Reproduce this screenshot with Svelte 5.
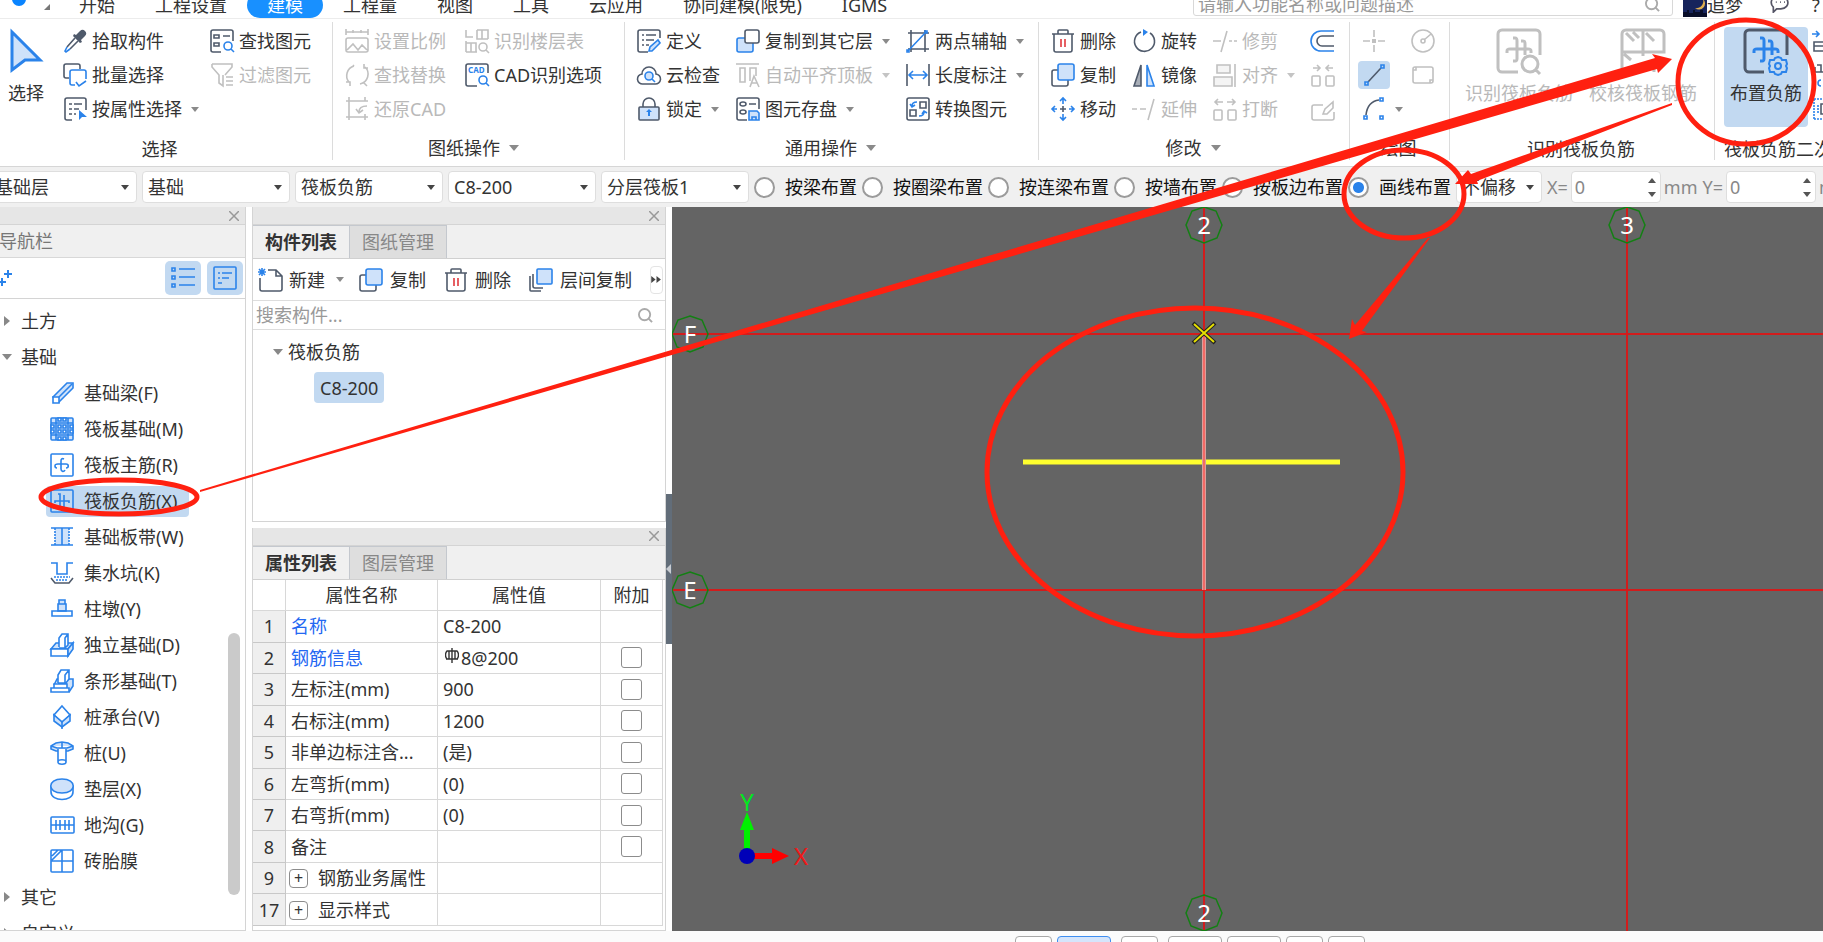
<script>
  // every icon is a list of [class, path] pairs on a 24x24 grid (44x44 for the big ones)
  const icons = {
    pick: [['solid', 'M13 6l4-4a3 3 0 0 1 5 5l-4 4 1 2-2 1-7-7 1-2z'], ['ink', 'M12 9l-8 9M15 12l-8 8'], ['blue', 'M4 18l-2 4 1 1 4-3']],
    batch: [['ink', 'M17 6V3a2 2 0 0 0-2-2H3a2 2 0 0 0-2 2v10a2 2 0 0 0 2 2h3'], ['blue', 'M12 22H9a2 2 0 0 1-2-2V9a2 2 0 0 1 2-2h12a2 2 0 0 1 2 2v7M13 19l3 4 7-5']],
    byProp: [['ink', 'M9 23H4a2 2 0 0 1-2-2V3a2 2 0 0 1 2-2h17a2 2 0 0 1 2 2v10M6 7h3M11 7h8M6 12h3M11 12h5M6 17h3M11 17h2'], ['fill', 'M16 13v10l3-3h5z']],
    find: [['ink', 'M11 23H3a2 2 0 0 1-2-2V3a2 2 0 0 1 2-2h18a2 2 0 0 1 2 2v9M4 6h5v3H4zM13 7h7M4 14h5v3H4z'], ['blue', 'M18 13a4 4 0 1 0 0 8a4 4 0 1 0 0-8M21 20l3 3']],
    filter: [['ink', 'M2 1h20v3l-7 8M2 1v3l7 8v8l4 3V12M16 14h7M16 18h7M16 22h7']],
    scale: [['ink', 'M1 0v6M23 0v6M1 3h22M8 1v3M16 1v3M3 9h18a2 2 0 0 1 2 2v10a2 2 0 0 1-2 2H3a2 2 0 0 1-2-2V11a2 2 0 0 1 2-2M2 21l6-6 5 6 4-5 5 5']],
    replace: [['ink', 'M9 3a10 10 0 0 0-5 16M1 19h4v4M15 21a10 10 0 0 0 5-17M23 5h-4V1M9 3l-1-1M18 19l4 4']],
    restore: [['ink', 'M1 4h22M4 0v23M1 20h22M20 0v4M20 17v6M22 9c-6 0-8 2-8 6M11 12l3 4 4-3']],
    floorTable: [['ink', 'M1 1v7h7M12 1h11v9M12 1v9h11M17 1v9M1 14h10v9M1 23h11M6 14v9M1 12v11'], ['ink', 'M18 14a4 4 0 1 0 0 8a4 4 0 1 0 0-8M21 21l3 3']],
    cad: [['ink', 'M12 23H3a2 2 0 0 1-2-2V3a2 2 0 0 1 2-2h18a2 2 0 0 1 2 2v7'], ['blue', 'M18 13a4 4 0 1 0 0 8a4 4 0 1 0 0-8M21 20l3 3']],
    define: [['ink', 'M11 23H3a2 2 0 0 1-2-2V3a2 2 0 0 1 2-2h18a2 2 0 0 1 2 2v6M5 6h2M9 6h10M5 11h2M9 11h8M5 16h2M9 16h3'], ['tint', 'M12 22l1-4 8-7 2 3-8 8z']],
    cloud: [['ink', 'M6 21a5 5 0 0 1-1-10a7 7 0 0 1 14 0a5 5 0 0 1-1 10z'], ['tint', 'M12 9a4 4 0 1 0 0 8a4 4 0 1 0 0-8M15 16l3 3']],
    lock: [['ink', 'M6 10V7a6 6 0 0 1 12 0v3'], ['inktint', 'M3 10h18a1 1 0 0 1 1 1v11a1 1 0 0 1-1 1H3a1 1 0 0 1-1-1V11a1 1 0 0 1 1-1z'], ['fill', 'M12 12l3 3h-2v4h-2v-4H9z']],
    copyLayer: [['tint', 'M3 9h12a2 2 0 0 1 2 2v10a2 2 0 0 1-2 2H3a2 2 0 0 1-2-2V11a2 2 0 0 1 2-2z'], ['paper', 'M11 1h10a2 2 0 0 1 2 2v9a2 2 0 0 1-2 2H11a2 2 0 0 1-2-2V3a2 2 0 0 1 2-2z']],
    alignTop: [['ink', 'M0 1h23M4 5h5v14H4zM14 18V5h6v8M14 24l4-11 5 11M16 20h5']],
    save: [['ink', 'M11 23H3a2 2 0 0 1-2-2V3a2 2 0 0 1 2-2h18a2 2 0 0 1 2 2v9M4 7a3 2 0 1 0 6 0a3 2 0 1 0-6 0M13 7h7M4 15a3 2 0 1 0 6 0a3 2 0 1 0-6 0'], ['tint', 'M13 14h8l2 2v7H13zM16 23v-3h4v3']],
    twoPoint: [['ink', 'M5 1v22M19 1v22M2 4h21M2 20h21'], ['blue', 'M2 22L20 3M1 21h2v2H1zM19 2h2v2h-2z']],
    length: [['ink', 'M1 1v22M23 1v22'], ['blue', 'M3 12h18M7 8l-4 4 4 4M17 8l4 4-4 4']],
    convert: [['ink', 'M3 1h18a2 2 0 0 1 2 2v18a2 2 0 0 1-2 2H3a2 2 0 0 1-2-2V3a2 2 0 0 1 2-2zM14 5h6v6h-6zM4 13h6v6H4z'], ['blue', 'M11 5c-3 0-5 1-5 4M4 7l2 3 3-2M13 19c3 0 5-1 5-4M16 17l2-3 3 2']],
    trash: [['ink', 'M1 5h22M7 5V2a1 1 0 0 1 1-1h8a1 1 0 0 1 1 1v3M3 5v16a2 2 0 0 0 2 2h14a2 2 0 0 0 2-2V5'], ['red', 'M10 10v8M14 10v8']],
    copy: [['ink', 'M7 7H3a2 2 0 0 0-2 2v12a2 2 0 0 0 2 2h12a2 2 0 0 0 2-2v-4'], ['tint', 'M9 1h12a2 2 0 0 1 2 2v12a2 2 0 0 1-2 2H9a2 2 0 0 1-2-2V3a2 2 0 0 1 2-2z']],
    move: [['blue', 'M12 1v6M9 4l3-3 3 3M12 23v-6M9 20l3 3 3-3M1 12h5M4 9l-3 3 3 3M23 12h-5M20 9l3 3-3 3'], ['ink', 'M12 9v6M9 12h6']],
    rotate: [['ink', 'M9 3a10 10 0 1 0 9 1'], ['fill', 'M11 0l5 3-5 4z']],
    mirror: [['solidgray', 'M9 2v21H2z'], ['tint', 'M15 2v21h7z']],
    extend: [['ink', 'M0 12h5M8 12h6M22 2l-6 21']],
    trim: [['ink', 'M0 12h8M14 2L8 23M16 12h3M21 12h3']],
    align: [['inktint', 'M4 2h13v8H4zM1 14h18v9H1z'], ['ink', 'M22 1v23']],
    breakIcon: [['ink', 'M2 13h6a1 1 0 0 1 1 1v8a1 1 0 0 1-1 1H2a1 1 0 0 1-1-1v-8a1 1 0 0 1 1-1zM16 13h6a1 1 0 0 1 1 1v8a1 1 0 0 1-1 1h-6a1 1 0 0 1-1-1v-8a1 1 0 0 1 1-1zM10 5H2M5 2L2 5l3 3M14 5h8M19 2l3 3-3 3']],
    offset: [['blue', 'M23 2H10a10 10 0 0 0 0 20h13'], ['ink', 'M23 7H11a5 5 0 0 0 0 10h12']],
    merge: [['ink', 'M2 13h6a1 1 0 0 1 1 1v8a1 1 0 0 1-1 1H2a1 1 0 0 1-1-1v-8a1 1 0 0 1 1-1zM16 13h6a1 1 0 0 1 1 1v8a1 1 0 0 1-1 1h-6a1 1 0 0 1-1-1v-8a1 1 0 0 1 1-1zM2 5h6M6 2l3 3-3 3M22 5h-6M18 2l-3 3 3 3']],
    edit: [['ink', 'M12 8H3a2 2 0 0 0-2 2v11a2 2 0 0 0 2 2h18a2 2 0 0 0 2-2v-6M12 17l2-5 8-7v6l-6 6z']],
    point: [['ink', 'M12 1v7M12 16v7M1 12h7M16 12h7'], ['solid', 'M10 10h4v4h-4z']],
    circle: [['ink', 'M12 1a11 11 0 1 0 0 22a11 11 0 1 0 0-22M13 11l7-6M12 10a2 2 0 1 0 0 4a2 2 0 1 0 0-4']],
    line: [['ink', 'M6 19L19 5'], ['blue', 'M3 19h3v3H3zM19 2h3v3h-3z']],
    rect: [['ink', 'M4 4h16a2 2 0 0 1 2 2v12a2 2 0 0 1-2 2H4a2 2 0 0 1-2-2V6a2 2 0 0 1 2-2zM2 7h3V4M19 20v-3h3']],
    arc: [['ink', 'M4 18C5 9 9 4 17 3'], ['blue', 'M2 19h3v3H2zM18 1h3v3h-3zM18 19h3v3h-3z']],
    newFile: [['ink', 'M2 10v11a2 2 0 0 0 2 2h18a2 2 0 0 0 2-2V8l-6-6h-8M18 2v6h6'], ['blue', 'M1 1l6 6M7 1L1 7M4 0v8M0 4h8']],
    layerCopy: [['ink', 'M1 8v14a1 1 0 0 0 1 1h10M4 6v12a2 2 0 0 0 2 2h8'], ['tint', 'M9 1h13a1 1 0 0 1 1 1v13a1 1 0 0 1-1 1H9a1 1 0 0 1-1-1V2a1 1 0 0 1 1-1z']],
    side1: [['blue', 'M0 5h7M4 2l3 3-3 3'], ['ink', 'M2 13h10v9H2zM2 17h10']],
    side2: [['ink', 'M2 22V12H0M3 4v5h6V2H5M3 9h8'], ['blue', 'M9 17a3 3 0 1 0 0 6']],
    side3: [['dots', 'M2 2v20M2 2h12M2 22h12M6 8v8'], ['ink', 'M12 7H9v10h3']],
    list: [['blue', 'M1 2h3v3H1zM1 10h3v3H1zM1 18h3v3H1zM8 3h16M8 11h16M8 19h16']],
    card: [['blue', 'M2 1h20a1 1 0 0 1 1 1v20a1 1 0 0 1-1 1H2a1 1 0 0 1-1-1V2a1 1 0 0 1 1-1zM5 7h2M9 7h10M5 12h2M9 12h7M5 17h4']],
    beam: [['tint', 'M3 16L17 2h6v5L9 21z'], ['white', 'M3 16h6v6H3z'], ['blue', 'M9 16L22 3']],
    raft: [['tint', 'M2 1h20a1 1 0 0 1 1 1v20a1 1 0 0 1-1 1H2a1 1 0 0 1-1-1V2a1 1 0 0 1 1-1z'], ['blue', 'M1 6h22M1 18h22M6 1v22M18 1v22'], ['white', 'M8 8h3v3H8zM13 8h3v3h-3zM8 13h3v3H8zM13 13h3v3h-3zM1 8h3v3H1zM1 13h3v3H1zM20 8h3v3h-3zM20 13h3v3h-3zM8 1h3v3H8zM13 1h3v3h-3zM8 20h3v3H8zM13 20h3v3h-3z']],
    rebarMain: [['blue', 'M2 1h20a1 1 0 0 1 1 1v20a1 1 0 0 1-1 1H2a1 1 0 0 1-1-1V2a1 1 0 0 1 1-1zM5 13c0-2 1-2 3-2h8c3 0 3 4 0 4M14 6c-2-1-3 0-3 2v8c0 3 3 3 4 1M7 15c-2 0-2-1-2-2']],
    rebarNeg: [['blue', 'M2 1h20a1 1 0 0 1 1 1v20a1 1 0 0 1-1 1H2a1 1 0 0 1-1-1V2a1 1 0 0 1 1-1zM5 14v-2h14v2M8 5h2v13H8M14 6v12h-2']],
    strip: [['tintonly', 'M5 4h14v16H5z'], ['blue', 'M1 3h22M1 20h22M12 3v17'], ['dots', 'M5 3v17M19 3v17']],
    pit: [['blue', 'M1 2h6v11h10V2h6'], ['dots', 'M4 16h16M6 19h12'], ['ink', 'M1 17l4 5h14l4-5']],
    pier: [['tint', 'M9 3h6v4H9zM8 7h8v7H8z'], ['blue', 'M2 14h20v5H2z']],
    isolated: [['tint', 'M1 16l5-6h17l-5 6z'], ['white', 'M1 16h17v7H1zM9 14V5l3-4h6v11l-3 3H9M15 15V5l3-4'], ['tint', 'M18 16l5-6v6l-5 7z']],
    stripFound: [['tint', 'M4 16l3-6h16v7l-4 6'], ['white', 'M1 19h18v4H1zM4 15h13v4H4zM8 14V6l3-5h8v9l-3 4H8M15 14V6l4-5']],
    cap: [['white', 'M12 1l8 9-8 7-8-7z'], ['tint', 'M4 10v6l8 6 8-6v-6l-8 7z'], ['blue', 'M12 17v7']],
    pile: [['tint', 'M1 5l5-3 6-1 6 1 5 3v3l-5 2H6L1 8zM1 5l6 2h10l6-2M12 1v6'], ['white', 'M8 8v13c0 3 8 3 8 0V8M8 21c0-3 8-3 8 0']],
    cushion: [['white', 'M1 9v6c0 10 22 10 22 0V9'], ['tint', 'M12 2C-3 2-3 16 12 16S27 2 12 2z']],
    trench: [['blue', 'M2 4h21a1 1 0 0 1 1 1v14a1 1 0 0 1-1 1H2a1 1 0 0 1-1-1V5a1 1 0 0 1 1-1zM1 12h23M6 7v10M10 7v10M15 7v10M19 7v10']],
    brick: [['blue', 'M2 1h20a1 1 0 0 1 1 1v20a1 1 0 0 1-1 1H2a1 1 0 0 1-1-1V2a1 1 0 0 1 1-1zM12 1v22M1 12h22M2 7l6-6M2 11L12 1']],
    cursor: [['tint', 'M3 3l28 28H16L3 41z']],
    recog: [['ink', 'M21 43H5a4 4 0 0 1-4-4V5a4 4 0 0 1 4-4h34a4 4 0 0 1 4 4v21M10 24v-2c0-2 1-2 3-2h18c2 0 3 0 3 2v2M16 9h2c2 0 2 1 2 3v18c0 2-1 2-4 2M24 12h2c2 0 2 1 2 3v11M33 27a8 8 0 1 0 0 16a8 8 0 1 0 0-16M38 40l5 5']],
    check: [['ink', 'M14 43H5a4 4 0 0 1-4-4V5a4 4 0 0 1 4-4h34a4 4 0 0 1 4 4v18H1M22 1v26M5 4l8 8M12 3l6 6M25 4l8 8M3 25l7 6M26 34h14M33 30v13']],
    place: [['ink', 'M20 43H5a4 4 0 0 1-4-4V5a4 4 0 0 1 4-4h34a4 4 0 0 1 4 4v21'], ['blue', 'M10 24v-2c0-2 1-2 3-2h18c2 0 3 0 3 2v2M16 9h2c2 0 2 1 2 3v18c0 2-1 2-4 2M24 12h2c2 0 2 1 2 3v11'], ['gear', 'M34 28l3 1 1 2 4 0 1 4-1 2 1 2-1 4-4 0-1 2-3 1-3-1-1-2-4 0-1-4 1-2-1-2 1-4 4 0 1-2zM34 34a3 3 0 1 0 0 6a3 3 0 1 0 0-6']],
  };

  const tabs = ['开始', '工程设置', '建模', '工程量', '视图', '工具', '云应用', '协同建模(限免)', 'IGMS'];

  const groups = [
    {
      label: '选择',
      big: [{ icon: 'cursor', text: '选择' }],
      cols: [
        [{ icon: 'pick', text: '拾取构件' }, { icon: 'batch', text: '批量选择' }, { icon: 'byProp', text: '按属性选择', more: true }],
        [{ icon: 'find', text: '查找图元' }, { icon: 'filter', text: '过滤图元', off: true }],
      ],
    },
    {
      label: '图纸操作',
      more: true,
      cols: [
        [{ icon: 'scale', text: '设置比例', off: true }, { icon: 'replace', text: '查找替换', off: true }, { icon: 'restore', text: '还原CAD', off: true }],
        [{ icon: 'floorTable', text: '识别楼层表', off: true }, { icon: 'cad', text: 'CAD识别选项' }],
      ],
    },
    {
      label: '通用操作',
      more: true,
      cols: [
        [{ icon: 'define', text: '定义' }, { icon: 'cloud', text: '云检查' }, { icon: 'lock', text: '锁定', more: true }],
        [{ icon: 'copyLayer', text: '复制到其它层', more: true }, { icon: 'alignTop', text: '自动平齐顶板', more: true, off: true }, { icon: 'save', text: '图元存盘', more: true }],
        [{ icon: 'twoPoint', text: '两点辅轴', more: true }, { icon: 'length', text: '长度标注', more: true }, { icon: 'convert', text: '转换图元' }],
      ],
    },
    {
      label: '修改',
      more: true,
      cols: [
        [{ icon: 'trash', text: '删除' }, { icon: 'copy', text: '复制' }, { icon: 'move', text: '移动' }],
        [{ icon: 'rotate', text: '旋转' }, { icon: 'mirror', text: '镜像' }, { icon: 'extend', text: '延伸', off: true }],
        [{ icon: 'trim', text: '修剪', off: true }, { icon: 'align', text: '对齐', more: true, off: true }, { icon: 'breakIcon', text: '打断', off: true }],
        [{ icon: 'offset', title: '偏移' }, { icon: 'merge', title: '合并', off: true }, { icon: 'edit', title: '编辑', off: true }],
      ],
    },
    {
      label: '绘图',
      cols: [
        [{ icon: 'point', title: '点', off: true }, { icon: 'line', title: '直线', active: true }, { icon: 'arc', title: '弧线', more: true }],
        [{ icon: 'circle', title: '圆', off: true }, { icon: 'rect', title: '矩形', off: true }],
      ],
    },
    {
      label: '识别筏板负筋',
      big: [{ icon: 'recog', text: '识别筏板负筋', off: true }, { icon: 'check', text: '校核筏板钢筋', off: true }],
      cols: [],
    },
    {
      label: '筏板负筋二次编辑',
      big: [{ icon: 'place', text: '布置负筋', active: true }],
      cols: [[{ icon: 'side1', title: '查看布筋' }, { icon: 'side2', title: '查改标注' }, { icon: 'side3', title: '布筋范围' }]],
    },
  ];

  const pickers = [
    { label: '楼层', value: '基础层' },
    { label: '类别', value: '基础' },
    { label: '构件类型', value: '筏板负筋' },
    { label: '构件', value: 'C8-200' },
    { label: '分层', value: '分层筏板1' },
  ];

  const modes = ['按梁布置', '按圈梁布置', '按连梁布置', '按墙布置', '按板边布置', '画线布置'];
  let mode = $state('画线布置');

  const navItems = [
    { icon: 'beam', text: '基础梁(F)' },
    { icon: 'raft', text: '筏板基础(M)' },
    { icon: 'rebarMain', text: '筏板主筋(R)' },
    { icon: 'rebarNeg', text: '筏板负筋(X)' },
    { icon: 'strip', text: '基础板带(W)' },
    { icon: 'pit', text: '集水坑(K)' },
    { icon: 'pier', text: '柱墩(Y)' },
    { icon: 'isolated', text: '独立基础(D)' },
    { icon: 'stripFound', text: '条形基础(T)' },
    { icon: 'cap', text: '桩承台(V)' },
    { icon: 'pile', text: '桩(U)' },
    { icon: 'cushion', text: '垫层(X)' },
    { icon: 'trench', text: '地沟(G)' },
    { icon: 'brick', text: '砖胎膜' },
  ];
  let current = $state('筏板负筋(X)');

  const rows = [
    { no: 1, name: '名称', value: 'C8-200', key: true, noBox: true },
    { no: 2, name: '钢筋信息', value: '8@200', key: true, rebar: true },
    { no: 3, name: '左标注(mm)', value: '900' },
    { no: 4, name: '右标注(mm)', value: '1200' },
    { no: 5, name: '非单边标注含...', value: '(是)' },
    { no: 6, name: '左弯折(mm)', value: '(0)' },
    { no: 7, name: '右弯折(mm)', value: '(0)' },
    { no: 8, name: '备注', value: '' },
    { no: 9, name: '钢筋业务属性', value: '', fold: true, noBox: true },
    { no: 17, name: '显示样式', value: '', fold: true, noBox: true },
  ];

  // axis bubbles
  const bubbles = [
    { x: 532, y: 18, text: '2' },
    { x: 955, y: 18, text: '3' },
    { x: 18, y: 127, text: 'F' },
    { x: 18, y: 383, text: 'E' },
    { x: 532, y: 706, text: '2' },
  ];
  const ring = '0,-18 12,-14 18,0 13,13 0,18 -13,13 -18,0 -12,-14';

  const statusSizes = ['s', 'm on', 's', 'm', 'm', 's', 's'];
</script>

{#snippet icon(name, big = false)}
  <svg class="icon" class:big viewBox={big ? (name === 'cursor' ? '0 0 34 44' : '0 0 44 44') : '0 0 24 24'} aria-hidden="true">
    {#each icons[name] as [kind, d]}
      <path class={kind} {d} />
    {/each}
    {#if name === 'cad'}
      <text x="3" y="10" class="mini">CAD</text>
    {/if}
  </svg>
{/snippet}

{#snippet closeStrip()}
  <div class="strip">
    <button type="button" aria-label="关闭">
      <svg viewBox="0 0 10 10"><path d="M0 0l10 10M10 0L0 10" /></svg>
    </button>
  </div>
{/snippet}

<div class="app">
  <header class="menu">
    <span class="logo"></span>
    <span class="corner"></span>
    <nav>
      {#each tabs as tab}
        <button type="button" class="tab" class:active={tab === '建模'}>{tab}</button>
      {/each}
    </nav>
    <div class="search">
      <input type="text" placeholder="请输入功能名称或问题描述" aria-label="搜索功能" />
      <svg viewBox="0 0 16 16"><circle cx="7" cy="7" r="6" /><path d="M11 11l4 4" /></svg>
    </div>
    <button type="button" class="user">
      <svg viewBox="0 0 24 24" aria-hidden="true">
        <path fill="#16245c" d="M0 0h24v24H0z" />
        <path fill="#e0b050" d="M20 6a6 6 0 0 1-8 9a7 7 0 0 0 8-9" />
        <path fill="#080d28" d="M0 19h4v-2h2v3h4v-3h2v2h5v-2h3v3h4v4H0z" />
      </svg>
      追梦
    </button>
    <button type="button" class="tool" aria-label="消息">
      <svg viewBox="0 0 24 24"><path d="M11 3c12 0 15 15 2 16H8l-4 4v-6C-1 12 2 3 11 3z" /><path d="M7 11h1M12 11h1M17 11h1" /></svg>
    </button>
    <button type="button" class="tool help">?</button>
  </header>

  <section class="ribbon">
    {#each groups as group}
      <div class="group">
        <div class="tools">
          {#each group.big ?? [] as item}
            <button type="button" class="bigbtn" class:off={item.off} class:active={item.active}>
              {@render icon(item.icon, true)}
              <span>{item.text}</span>
            </button>
          {/each}
          {#each group.cols as col}
            <div class="col">
              {#each col as item}
                <button type="button" class="cmd" class:off={item.off} class:active={item.active} aria-label={item.title}>
                  {@render icon(item.icon)}
                  {#if item.text}<span>{item.text}</span>{/if}
                  {#if item.more}<i class="caret"></i>{/if}
                </button>
              {/each}
            </div>
          {/each}
        </div>
        <div class="label">
          {group.label}
          {#if group.more}<i class="caret wide"></i>{/if}
        </div>
      </div>
    {/each}
  </section>

  <section class="options">
    {#each pickers as picker}
      <label class="picker">
        <select aria-label={picker.label}><option>{picker.value}</option></select>
      </label>
    {/each}
    {#each modes as item}
      <label class="mode">
        <input type="radio" name="mode" value={item} bind:group={mode} />
        {item}
      </label>
    {/each}
    <label class="picker short">
      <select aria-label="偏移方式"><option>不偏移</option></select>
    </label>
    {#each ['X', 'Y'] as axis}
      <label class="offset">
        {axis}=
        <span class="spin">
          <input type="text" value="0" />
          <i class="up"></i>
          <i class="down"></i>
        </span>
        mm
      </label>
    {/each}
  </section>

  <main>
    <aside class="nav">
      {@render closeStrip()}
      <h2>导航栏</h2>
      <div class="navbar">
        <svg class="plus" viewBox="0 0 14 16"><path d="M8 0v8M4 4h8M2 8v8M0 12h6" /></svg>
        <button type="button" class="view" aria-label="列表">{@render icon('list')}</button>
        <button type="button" class="view" aria-label="详情">{@render icon('card')}</button>
      </div>
      <div class="treebox">
        <ul class="tree">
          <li class="root"><i class="fold"></i>土方</li>
          <li class="root"><i class="fold open"></i>基础</li>
          {#each navItems as item}
            <li>
              <button type="button" class:active={current === item.text} onclick={() => (current = item.text)}>
                {@render icon(item.icon)}
                {item.text}
              </button>
            </li>
          {/each}
          <li class="root"><i class="fold"></i>其它</li>
          <li class="root"><i class="fold"></i>自定义</li>
        </ul>
        <span class="thumb"></span>
      </div>
    </aside>

    <div class="panels">
      <section class="panel upper">
        {@render closeStrip()}
        <div class="ptabs">
          <button type="button" class="active">构件列表</button>
          <button type="button">图纸管理</button>
        </div>
        <div class="bar">
          <button type="button">{@render icon('newFile')}新建<i class="caret"></i></button>
          <button type="button">{@render icon('copy')}复制</button>
          <button type="button">{@render icon('trash')}删除</button>
          <button type="button">{@render icon('layerCopy')}层间复制</button>
          <button type="button" class="next" aria-label="更多">
            <svg viewBox="0 0 12 8"><path d="M0 0l5 4-5 4zM6 0l5 4-5 4z" /></svg>
          </button>
        </div>
        <div class="find">
          <input type="text" placeholder="搜索构件..." aria-label="搜索构件" />
          <svg viewBox="0 0 16 16"><circle cx="7" cy="7" r="6" /><path d="M11 11l4 4" /></svg>
        </div>
        <div class="parts">
          <div class="part"><i class="fold open"></i>筏板负筋</div>
          <button type="button">C8-200</button>
        </div>
      </section>

      <section class="panel lower">
        {@render closeStrip()}
        <div class="ptabs">
          <button type="button" class="active">属性列表</button>
          <button type="button">图层管理</button>
        </div>
        <div class="tablebox">
          <table>
            <thead>
              <tr><th class="no"></th><th class="name">属性名称</th><th>属性值</th><th class="extra">附加</th></tr>
            </thead>
            <tbody>
              {#each rows as row}
                <tr>
                  <td class="no">{row.no}</td>
                  <td class:key={row.key}>
                    {#if row.fold}<button type="button" class="expand" aria-label="展开">+</button>{/if}{row.name}
                  </td>
                  <td>
                    {#if row.rebar}
                      <svg class="rebar" viewBox="0 0 14 16"><path d="M7 0v15M4 3v8M10 3v8M1 11h12M4 3H2C0 5 0 9 2 11M10 3h2c2 2 2 6 0 8M4 3h6" /></svg>
                    {/if}{row.value}
                  </td>
                  <td class="extra">
                    {#if !row.noBox}<input type="checkbox" aria-label={row.name} />{/if}
                  </td>
                </tr>
              {/each}
            </tbody>
          </table>
        </div>
      </section>
    </div>

    <div class="splitter"><span></span></div>

    <div class="canvas">
      <svg aria-label="绘图区">
        <g class="grid">
          <path d="M532 0V724M955 0V724" />
          <path d="M0 127H2000M0 383H2000" />
        </g>
        {#each bubbles as b}
          <g transform="translate({b.x} {b.y})">
            <polygon class="ring" points={ring} />
            <text y="9">{b.text}</text>
          </g>
        {/each}
        <path class="bar-line" d="M351 255H668" />
        <path class="pick-line" d="M532 127V383" />
        <path class="pick-core" d="M532 127V383" />
        <path class="mark-edge" d="M521 116l22 20M543 116l-22 20" />
        <path class="mark" d="M522 117l20 18M542 117l-20 18" />
        <g class="axes">
          <path class="yarrow" d="M72 645v-22h-4l7-18 7 18h-4v22z" />
          <path class="xarrow" d="M82 646h18v-5l17 8-17 8v-5H82z" />
          <circle cx="75" cy="649" r="8" fill="#0000b8" />
          <text x="75" y="604" class="y">Y</text>
          <text x="129" y="658" class="x">X</text>
        </g>
      </svg>
    </div>
  </main>

  <footer>
    {#each statusSizes as size}
      <button type="button" class={size} aria-label="状态"></button>
    {/each}
  </footer>

  <!-- red guide marks over the whole window -->
  <svg class="notes" aria-hidden="true">
    <ellipse cx="119" cy="497" rx="78" ry="17" />
    <ellipse cx="1404" cy="194" rx="60" ry="44" />
    <ellipse cx="1746" cy="82" rx="68" ry="62" />
    <ellipse cx="1195" cy="472" rx="208" ry="164" />
    <polygon points="200,490 1655,58 1652,54 1672,59 1658,73 1657,69 200,492" />
    <polygon points="1672,103 1471,174 1468,170 1455,184 1478,184 1477,181 1672,105" />
    <polygon points="1428,238 1355,325 1352,319 1349,339 1367,332 1362,331 1430,238" />
  </svg>
</div>

<style>
  :global(body) {
    margin: 0;
  }

  .app {
    --ink: #4f5a6b;
    --blue: #2b83ea;
    --tint: #cfe2fa;
    --pick: #c2d9f1;
    position: relative;
    display: flex;
    flex-direction: column;
    height: 100vh;
    overflow: hidden;
    background: #fbfbfb;
    color: #333;
    font: 18px/24px 'Noto Sans', 'Noto Sans CJK SC', sans-serif;
  }

  button,
  input,
  select {
    font: inherit;
    color: inherit;
    margin: 0;
    padding: 0;
    border: 0;
    background: none;
    box-sizing: border-box;
  }

  button {
    white-space: nowrap;
  }

  /* Icons */
  .icon {
    width: 24px;
    height: 24px;
    flex: none;
    overflow: visible;
    fill: none;
    stroke-width: 1.6;
  }

  .icon.big {
    width: auto;
    height: 44px;
    stroke-width: 3;
  }

  .ink,
  .inktint,
  .paper {
    stroke: var(--ink);
  }

  .paper,
  .white {
    fill: #fff;
  }

  .inktint,
  .tint,
  .tintonly {
    fill: var(--tint);
  }

  .blue,
  .tint,
  .white,
  .gear {
    stroke: var(--blue);
  }

  .gear {
    stroke-width: 2;
  }

  .fill {
    fill: var(--blue);
  }

  .solid {
    fill: var(--ink);
  }

  .solidgray {
    fill: #a9afb8;
    stroke: var(--ink);
  }

  .red {
    stroke: #e0393e;
  }

  .dots {
    stroke: var(--blue);
    stroke-dasharray: 2 1;
  }

  .mini {
    fill: var(--blue);
    font-size: 8px;
    font-weight: 700;
  }

  .off {
    --ink: #c0c0c0;
    --blue: #c0c0c0;
    --tint: #f4f4f4;
    color: #b9b9b9;
  }

  .caret {
    width: 0;
    height: 0;
    flex: none;
    border: 4px solid transparent;
    border-top: 5px solid #8a8a8a;
    border-bottom: 0;
    margin-left: 4px;
  }

  .off .caret {
    border-top-color: #c4c4c4;
  }

  .caret.wide {
    border-width: 6px 5px 0;
    margin-left: 9px;
  }

  /* Menu */
  .menu {
    display: flex;
    align-items: flex-end;
    height: 18px;
    flex: none;
    overflow: hidden;
    background: #fff;
    border-bottom: 1px solid #ececec;
  }

  .logo {
    width: 14px;
    height: 14px;
    margin: 0 18px 12px 12px;
    border-radius: 50%;
    background: #0a84ff;
  }

  .corner {
    border: 3px solid #777;
    border-top-color: transparent;
    border-left-color: transparent;
    margin-bottom: 8px;
  }

  .menu nav {
    display: flex;
    padding-left: 9px;
  }

  .tab {
    height: 26px;
    padding: 0 20px;
  }

  .tab.active {
    color: #fff;
    background: #1890ff;
    border-radius: 13px;
  }

  .search {
    display: flex;
    align-items: center;
    flex: 0 1 480px;
    box-sizing: border-box;
    height: 24px;
    margin: 0 10px 2px auto;
    padding: 0 12px 0 4px;
    border: 1px solid #d8d8d8;
    border-radius: 3px;
  }

  .search input,
  .find input {
    flex: 1;
    min-width: 0;
  }

  input::placeholder {
    color: #999;
    opacity: 1;
  }

  .search svg,
  .find svg {
    width: 15px;
    height: 15px;
    fill: none;
    stroke: #aaa;
    stroke-width: 2;
  }

  .user {
    display: flex;
    align-items: center;
    height: 27px;
  }

  .user svg {
    width: 24px;
    height: 24px;
  }

  .tool {
    margin-left: 25px;
    height: 26px;
  }

  .tool.help {
    width: 14px;
    margin-left: 17px;
  }

  .tool svg {
    width: 24px;
    height: 20px;
    fill: none;
    stroke: #556;
    stroke-width: 2;
  }

  /* Ribbon */
  .ribbon {
    display: flex;
    flex: none;
    height: 147px;
    overflow: hidden;
    background: #fff;
    border-bottom: 1px solid #d6d6d6;
  }

  .group {
    display: flex;
    flex-direction: column;
    flex: none;
    margin: 3px 0 6px;
    padding: 0 14px 0 12px;
    border-right: 1px solid #dcdcdc;
  }

  .tools {
    display: flex;
    gap: 16px;
    padding-top: 2px;
  }

  .group:nth-child(1) {
    padding: 0 21px 0 8px;
  }

  .group:nth-child(1) .tools {
    gap: 11px;
  }

  .group:nth-child(1) .bigbtn {
    margin-right: 8px;
  }

  .group:nth-child(2) {
    padding-right: 22px;
  }

  .group:nth-child(2) .tools {
    gap: 19px;
  }

  .group:nth-child(5) .tools {
    gap: 8px;
  }

  .group:nth-child(6) {
    padding: 0 17px 0 15px;
  }

  .group:nth-child(7) {
    padding: 0 0 0 9px;
  }

  .group:nth-child(7) .tools {
    gap: 4px;
  }

  .col {
    display: flex;
    flex-direction: column;
    align-items: flex-start;
  }

  .cmd {
    display: flex;
    align-items: center;
    gap: 5px;
    height: 34px;
  }

  .cmd.active {
    height: 28px;
    margin: 3px 0 3px -4px;
    padding: 0 4px;
    border-radius: 4px;
    background: var(--pick);
  }

  .bigbtn {
    display: flex;
    flex-direction: column;
    align-items: center;
    gap: 8px;
    height: 100px;
    margin-top: 3px;
    padding-top: 2px;
  }

  .bigbtn.active {
    padding: 2px 6px 0;
    border-radius: 4px;
    background: var(--pick);
  }

  .label {
    display: flex;
    flex: 1;
    align-items: center;
    justify-content: center;
    padding-top: 10px;
    white-space: nowrap;
  }

  /* Options bar */
  .options {
    display: flex;
    align-items: center;
    gap: 5px;
    flex: none;
    height: 40px;
    margin-left: -11px;
    background: #f0f0f0;
    overflow: hidden;
    white-space: nowrap;
  }

  .picker {
    position: relative;
    flex: none;
    width: 148px;
  }

  .picker.short {
    width: 86px;
  }

  .picker select {
    width: 100%;
    height: 32px;
    padding-left: 5px;
    appearance: none;
    background: #fff;
    border: 1px solid #dedede;
    border-radius: 4px;
  }

  .picker::after {
    content: '';
    position: absolute;
    right: 8px;
    top: 14px;
    border: 4px solid transparent;
    border-top: 5px solid #444;
    border-bottom: 0;
  }

  .mode {
    display: flex;
    align-items: center;
    gap: 10px;
    color: #111;
  }

  .mode input {
    width: 21px;
    height: 21px;
    appearance: none;
    border: 2px solid #9b9b9b;
    border-radius: 50%;
    background: #fff;
  }

  .mode input:checked {
    background: radial-gradient(circle, #2b83ea 5px, #fff 6px);
  }

  .offset {
    display: flex;
    align-items: center;
    gap: 3px;
    color: #888;
  }

  .spin {
    position: relative;
  }

  .spin input {
    width: 90px;
    height: 32px;
    padding-left: 3px;
    background: #fff;
    border: 1px solid #dedede;
    border-radius: 4px;
  }

  .spin i {
    position: absolute;
    right: 5px;
    border: 4px solid transparent;
  }

  .spin .up {
    top: 7px;
    border-top: 0;
    border-bottom: 5px solid #555;
  }

  .spin .down {
    bottom: 6px;
    border-bottom: 0;
    border-top: 5px solid #555;
  }

  /* Body */
  main {
    display: flex;
    flex: 1;
    min-height: 0;
    background: #fff;
  }

  .strip {
    display: flex;
    align-items: center;
    justify-content: flex-end;
    flex: none;
    height: 17px;
    padding-right: 6px;
    background: #e6e6e6;
    border-bottom: 1px solid #d4d4d4;
  }

  .strip button {
    display: flex;
  }

  .strip svg {
    width: 10px;
    height: 10px;
    stroke: #999;
    stroke-width: 1.5;
  }

  .nav {
    display: flex;
    flex-direction: column;
    flex: none;
    width: 245px;
    margin-right: 6px;
    border-right: 1px solid #d4d4d4;
    border-bottom: 1px solid #d4d4d4;
  }

  .nav h2 {
    margin: 0;
    font-size: 18px;
    font-weight: 400;
    line-height: 32px;
    text-indent: -1px;
    color: #777;
    background: #f0f0f0;
    border-bottom: 1px solid #d8d8d8;
  }

  .navbar {
    display: flex;
    align-items: center;
    gap: 6px;
    height: 40px;
    padding-right: 2px;
    border-bottom: 1px solid #d4d4d4;
  }

  .plus {
    width: 14px;
    height: 16px;
    margin-right: auto;
    stroke: var(--blue);
    stroke-width: 2;
  }

  .view {
    display: flex;
    align-items: center;
    justify-content: center;
    width: 36px;
    height: 34px;
    border-radius: 5px;
    background: var(--pick);
  }

  .treebox {
    position: relative;
    flex: 1;
    min-height: 0;
    overflow: hidden;
  }

  .tree {
    list-style: none;
    margin: 0;
    padding: 4px 0 0;
  }

  .tree li {
    display: flex;
    align-items: center;
    height: 36px;
    padding-left: 46px;
  }

  .tree li.root {
    padding-left: 2px;
  }

  .tree button {
    display: flex;
    align-items: center;
    gap: 10px;
    height: 31px;
    padding: 0 12px 0 4px;
    border-radius: 4px;
  }

  .tree button.active {
    background: var(--pick);
  }

  .fold {
    width: 0;
    flex: none;
    border: 5px solid transparent;
    border-left: 6px solid #888;
    border-right: 0;
    margin: 0 11px 0 2px;
  }

  .fold.open {
    border: 5px solid transparent;
    border-top: 6px solid #888;
    border-bottom: 0;
    margin: 0 9px 0 0;
  }

  .thumb {
    position: absolute;
    right: 5px;
    top: 53%;
    width: 12px;
    height: 262px;
    border-radius: 6px;
    background: #cacaca;
  }

  .panels {
    display: flex;
    flex-direction: column;
    gap: 6px;
    flex: none;
    width: 414px;
  }

  .panel {
    display: flex;
    flex-direction: column;
    box-sizing: border-box;
    min-height: 0;
    border: 1px solid #d4d4d4;
    border-top: 0;
  }

  .upper {
    flex: 315;
  }

  .lower {
    flex: 404;
  }

  .ptabs {
    display: flex;
    flex: none;
    height: 33px;
    background: #f0f0f0;
    border-bottom: 1px solid #d0d0d0;
  }

  .ptabs button {
    padding: 0 12px;
    color: #888;
    background: #dedede;
    border: 1px solid #c4c8ce;
    border-width: 1px 1px 0 0;
  }

  .ptabs .active {
    color: #333;
    font-weight: 700;
    background: #f0f0f0;
  }

  .bar {
    display: flex;
    align-items: center;
    flex: none;
    gap: 18px;
    height: 41px;
    padding: 0 2px 0 5px;
    border-bottom: 1px solid #ddd;
  }

  .bar button {
    display: flex;
    align-items: center;
    gap: 7px;
  }

  .bar .caret {
    margin: 0 -3px 0 4px;
  }

  .bar .next {
    justify-content: center;
    width: 15px;
    height: 28px;
    margin-left: auto;
    border: 1px solid #e4e4e4;
    border-radius: 4px;
  }

  .next svg {
    width: 11px;
    height: 7px;
    flex: none;
    fill: #444;
  }

  .find {
    display: flex;
    align-items: center;
    flex: none;
    height: 28px;
    padding: 0 12px 0 3px;
    border-bottom: 1px solid #ddd;
  }

  .parts {
    padding: 4px 20px;
  }

  .part {
    display: flex;
    align-items: center;
    height: 36px;
  }

  .part .fold.open {
    margin-right: 5px;
  }

  .parts button {
    height: 31px;
    margin: 2px 0 0 41px;
    padding: 0 6px;
    border-radius: 4px;
    background: var(--pick);
  }

  .tablebox {
    flex: 1;
    min-height: 0;
    padding: 0 2px 4px 0;
  }

  table {
    width: 100%;
    height: 100%;
    table-layout: fixed;
    border-collapse: collapse;
  }

  tr {
    height: 31px;
  }

  th,
  td {
    padding: 0 5px;
    font-weight: 400;
    text-align: left;
    white-space: nowrap;
    border: 1px solid #d8d8d8;
    border-width: 0 1px 1px 0;
  }

  th {
    text-align: center;
  }

  td.no {
    padding: 0;
    text-align: center;
    background: #efefef;
    border-color: #c8c8c8;
  }

  th.no {
    width: 32px;
    padding: 0;
  }

  th.name {
    width: 141px;
  }

  .extra {
    width: 51px;
    text-align: center;
  }

  .key {
    color: #2468f2;
  }

  td input {
    display: block;
    width: 21px;
    height: 21px;
    margin: 0 auto;
    appearance: none;
    background: #fff;
    border: 1px solid #8c8c8c;
    border-radius: 3px;
  }

  .expand {
    width: 19px;
    height: 19px;
    margin: 0 10px 0 -2px;
    font-size: 16px;
    line-height: 15px;
    vertical-align: 1px;
    border: 1px solid #8c8c8c;
    border-radius: 4px;
  }

  .rebar {
    width: 14px;
    height: 16px;
    margin: 0 2px;
    vertical-align: 1px;
    fill: none;
    stroke: #333;
    stroke-width: 1.4;
  }

  .splitter {
    display: flex;
    align-items: center;
    flex: none;
    width: 6px;
  }

  .splitter span {
    display: flex;
    align-items: center;
    width: 6px;
    height: 150px;
    background: #626d79;
  }

  .splitter span::after {
    content: '';
    border: 5px solid transparent;
    border-left: 0;
    border-right: 5px solid #c8ccd2;
  }

  .canvas {
    flex: 1;
    min-width: 0;
    overflow: hidden;
    background: #646464;
  }

  .canvas svg {
    display: block;
    width: 100%;
    height: 100%;
  }

  .canvas text {
    font-size: 24px;
    fill: #fff;
    text-anchor: middle;
  }

  .canvas path {
    fill: none;
  }

  .grid path {
    stroke: #d21c1c;
    stroke-width: 2;
  }

  .ring {
    fill: none;
    stroke: #138013;
    stroke-width: 1.5;
  }

  .bar-line {
    stroke: #ffff2e;
    stroke-width: 5;
  }

  .pick-line {
    stroke: #d9a09c;
    stroke-width: 4;
  }

  .pick-core {
    stroke: #f26a66;
    stroke-width: 2;
  }

  .mark-edge {
    stroke: #222;
    stroke-width: 4;
  }

  .mark {
    stroke: #e6e000;
    stroke-width: 2;
  }

  .axes .yarrow {
    fill: #00f000;
  }

  .axes .xarrow {
    fill: #f00;
  }

  .axes .y {
    fill: #00e820;
  }

  .axes .x {
    fill: #f01818;
  }

  footer {
    display: flex;
    flex: none;
    justify-content: center;
    gap: 5px;
    height: 6px;
    padding: 5px 0 0 557px;
    overflow: hidden;
    background: #fbfbfb;
  }

  footer button {
    width: 37px;
    height: 24px;
    border: 1px solid #a8a8a8;
    border-radius: 4px;
    background: #fff;
  }

  footer .m {
    width: 54px;
  }

  footer .on {
    margin-right: 5px;
    border-color: #3f8ef0;
    background: #d5e5fb;
  }

  footer .on + .s {
    margin-right: 5px;
  }

  /* Guide marks */
  .notes {
    position: absolute;
    inset: 0;
    width: 100%;
    height: 100%;
    pointer-events: none;
  }

  .notes ellipse {
    fill: none;
    stroke: #ff2010;
    stroke-width: 5;
  }

  .notes polygon {
    fill: #ff2010;
  }
</style>
